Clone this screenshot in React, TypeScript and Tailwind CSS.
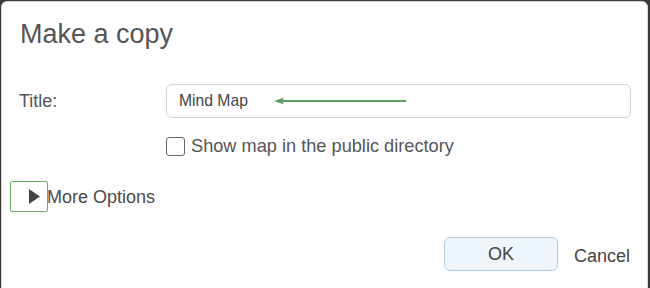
import React from "react";

export default function App() {
  const font = { fontFamily: '"Liberation Sans", Arial, sans-serif' };
  return (
    <div className="w-[650px] h-[288px] bg-[#3a3a3a] overflow-hidden" style={font}>
      <div className="relative ml-[1px] mt-[1px] w-[647px] h-[300px] bg-white border border-[#d6d6d6] rounded-[6px] text-[#555]">
        <div className="pl-[18px] pt-[15px] text-[27px] leading-[34px] text-[#555]">Make a copy</div>

        <div className="flex items-center mt-[33px]">
          <div className="w-[164px] pl-[17px] text-[18px] leading-[24px]">Title:</div>
          <div className="relative flex items-center w-[465px] h-[34px] border border-[#d0d0d0] rounded-[6px] pl-[12px] text-[15.7px] text-[#444]">
            Mind Map
            <svg className="absolute left-[107px] top-[11px]" width="134" height="10" viewBox="0 0 134 10">
              <line x1="6" y1="5" x2="132" y2="5" stroke="#5c9e5c" strokeWidth="2" />
              <path d="M0 5 L10 1.5 L8 5 L10 8.5 Z" fill="#5c9e5c" />
            </svg>
          </div>
        </div>

        <div className="flex items-center mt-[16px] ml-[164px] h-[24px]">
          <div className="w-[19px] h-[19px] border border-[#666] rounded-[3px] bg-white" />
          <span className="ml-[6px] text-[18.2px] leading-[24px] text-[#555]">Show map in the public directory</span>
        </div>

        <div className="flex items-center mt-[23px] ml-[8px]">
          <div className="w-[38px] h-[31px] border border-[#6aaa6a] rounded-[2px] flex items-center justify-end pr-[7px]">
            <svg width="11" height="15" viewBox="0 0 11 15">
              <path d="M0 0 L11 7.5 L0 15 Z" fill="#444" />
            </svg>
          </div>
          <span className="text-[18px] leading-[24px] text-[#4a4a4a] -ml-[1px]">More Options</span>
        </div>

        <div className="flex items-center justify-end mt-[25px] pr-[17px]">
          <button className="w-[114px] h-[34px] bg-[#eef6fc] border border-[#a9cde8] rounded-[6px] text-[18px] text-[#444]">
            OK
          </button>
          <span className="ml-[16px] text-[18px] leading-[24px] text-[#444] mt-[3px]">Cancel</span>
        </div>
      </div>
    </div>
  );
}
